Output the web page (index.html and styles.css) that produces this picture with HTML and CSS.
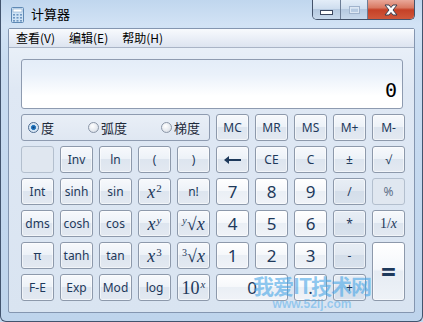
FILE: index.html
```html
<!DOCTYPE html>
<html lang="zh">
<head>
<meta charset="utf-8">
<title>计算器</title>
<link rel="stylesheet" href="styles.css">
</head>
<body>
<div class="window">
  <div class="titlebar">
    <svg class="appicon" width="13" height="16" viewBox="0 0 13 16">
      <rect x="0.5" y="0.5" width="12" height="15" rx="1" fill="#cfe3f5" stroke="#5f89b4"/>
      <rect x="2" y="2" width="9" height="3" fill="#ffffff" stroke="#7fa3c8" stroke-width="0.6"/>
      <g fill="#6f97c2">
        <rect x="2" y="7" width="2" height="1.6"/><rect x="5.5" y="7" width="2" height="1.6"/><rect x="9" y="7" width="2" height="1.6"/>
        <rect x="2" y="10" width="2" height="1.6"/><rect x="5.5" y="10" width="2" height="1.6"/><rect x="9" y="10" width="2" height="1.6"/>
        <rect x="2" y="13" width="2" height="1.6"/><rect x="5.5" y="13" width="2" height="1.6"/><rect x="9" y="13" width="2" height="1.6"/>
      </g>
    </svg>
    <span class="title">计算器</span>
    <div class="caption">
      <div class="cbtn cmin"><span class="minbar"></span></div>
      <div class="cbtn cmax"><span class="maxbox"></span></div>
      <div class="cbtn cclose">
        <svg width="16" height="12" viewBox="0 0 16 12"><path d="M2 1h4l2 2.5L10 1h4l-4 5 4 5h-4l-2-2.5L6 11H2l4-5z" fill="#ffffff" stroke="#3a3f4f" stroke-width="1"/></svg>
      </div>
    </div>
  </div>
  <div class="client">
    <div class="menubar">
      <span class="menu">查看(V)</span>
      <span class="menu">编辑(E)</span>
      <span class="menu">帮助(H)</span>
    </div>
    <div class="body">
      <div class="display"><span class="value">0</span></div>
      <div class="keys">
        <div class="radios">
          <span class="radio on"><span class="dot"></span>度</span>
          <span class="radio"><span class="dot"></span>弧度</span>
          <span class="radio"><span class="dot"></span>梯度</span>
        </div>
        <div class="btn">MC</div>
        <div class="btn">MR</div>
        <div class="btn">MS</div>
        <div class="btn">M+</div>
        <div class="btn">M-</div>

        <div class="btn off"></div>
        <div class="btn">Inv</div>
        <div class="btn">ln</div>
        <div class="btn">(</div>
        <div class="btn">)</div>
        <div class="btn"><svg width="18" height="8" viewBox="0 0 18 8"><path d="M17 4H3" stroke="#1e395b" stroke-width="2"/><path d="M0 4l5-4v8z" fill="#1e395b"/></svg></div>
        <div class="btn">CE</div>
        <div class="btn">C</div>
        <div class="btn">±</div>
        <div class="btn">√</div>

        <div class="btn">Int</div>
        <div class="btn">sinh</div>
        <div class="btn">sin</div>
        <div class="btn m"><i>x</i><sup>2</sup></div>
        <div class="btn">n!</div>
        <div class="btn num">7</div>
        <div class="btn num">8</div>
        <div class="btn num">9</div>
        <div class="btn op">/</div>
        <div class="btn off">%</div>

        <div class="btn">dms</div>
        <div class="btn">cosh</div>
        <div class="btn">cos</div>
        <div class="btn m"><i>x</i><sup><i>y</i></sup></div>
        <div class="btn m"><sup class="rs"><i>y</i></sup>√<i>x</i></div>
        <div class="btn num">4</div>
        <div class="btn num">5</div>
        <div class="btn num">6</div>
        <div class="btn op">*</div>
        <div class="btn m small">1/<i>x</i></div>

        <div class="btn">π</div>
        <div class="btn">tanh</div>
        <div class="btn">tan</div>
        <div class="btn m"><i>x</i><sup>3</sup></div>
        <div class="btn m"><sup class="rs">3</sup>√<i>x</i></div>
        <div class="btn num">1</div>
        <div class="btn num">2</div>
        <div class="btn num">3</div>
        <div class="btn op">-</div>
        <div class="btn eq">=</div>

        <div class="btn">F-E</div>
        <div class="btn">Exp</div>
        <div class="btn">Mod</div>
        <div class="btn">log</div>
        <div class="btn m">10<sup><i>x</i></sup></div>
        <div class="btn num zero">0</div>
        <div class="btn num">.</div>
        <div class="btn op">+</div>
      </div>
      <div class="watermark">
        <span class="wm1">我爱IT技术网</span>
        <span class="wm2">www.52ij.com</span>
      </div>
    </div>
  </div>
</div>
</body>
</html>
```
FILE: styles.css
```css
html, body {
  margin: 0;
  padding: 0;
  width: 423px;
  height: 322px;
  overflow: hidden;
  background: #c5daf0;
}
.window {
  box-sizing: border-box;
  width: 423px;
  height: 322px;
  display: flex;
  flex-direction: column;
  padding: 0 7px 8px 7px;
  border: 1px solid #42546e;
  border-top: none;
  border-radius: 0 0 6px 6px;
  background: linear-gradient(180deg, #c0d6ee 0%, #d2e3f5 25px, #c9dcf1 60px, #bed4ec 100%);
  font-family: "Noto Sans CJK SC", "Noto Sans", sans-serif;
}
.titlebar {
  height: 28px;
  display: flex;
  align-items: flex-start;
  flex: none;
}
.appicon {
  margin: 7px 0 0 3px;
  flex: none;
}
.title {
  margin: 4px 0 0 7px;
  font-size: 13px;
  line-height: 20px;
  color: #000;
}
.caption {
  margin-left: auto;
  display: flex;
  height: 19px;
  border: 1px solid #44536b;
  border-top: none;
  border-radius: 0 0 5px 5px;
  overflow: hidden;
}
.cbtn {
  height: 19px;
  display: flex;
  align-items: center;
  justify-content: center;
  box-sizing: border-box;
}
.cmin, .cmax {
  width: 27px;
  background: linear-gradient(180deg, #e3edf8 0%, #cfdeef 45%, #b5c9e0 50%, #c8d9ec 100%);
  border-right: 1px solid #6c7d96;
}
.cmin { width: 28px; }
.minbar {
  width: 11px;
  height: 3px;
  background: #fff;
  border: 1px solid #3c4860;
  margin-top: 5px;
}
.maxbox {
  width: 9px;
  height: 6px;
  border: 1px solid #a0b3cc;
  box-shadow: inset 0 0 0 1px #dde7f3;
}
.cclose {
  width: 46px;
  background: linear-gradient(180deg, #e9a899 0%, #d97a63 40%, #c54127 52%, #d0583b 100%);
}
.client {
  flex: 1;
  display: flex;
  flex-direction: column;
  border: 1px solid #8496b0;
  border-radius: 2px;
  background: linear-gradient(180deg, #edf3fa 0%, #dfe8f4 60px, #d9e4f1 100%);
  position: relative;
}
.menubar {
  height: 18px;
  display: flex;
  align-items: center;
  padding-left: 7px;
  background: linear-gradient(180deg, #f8fafd 0%, #eaeff7 50%, #dde4f0 100%);
  border-bottom: 1px solid #a9b4c6;
}
.menu {
  font-size: 12px;
  color: #000;
  margin-right: 14px;
  line-height: 18px;
}
.body {
  flex: 1;
  padding: 11px 11px 0 12px;
  display: flex;
  flex-direction: column;
  gap: 5px;
}
.display {
  height: 50px;
  box-sizing: border-box;
  border: 1px solid #8e9bb0;
  border-radius: 3px;
  background: linear-gradient(180deg, #e4edf8 0%, #eaf1fa 30%, #ffffff 75%, #ffffff 100%);
  display: flex;
  align-items: flex-end;
  justify-content: flex-end;
  padding: 0 5px 7px 0;
}
.value {
  font-family: "DejaVu Sans Mono", "Liberation Mono", monospace;
  font-size: 20px;
  line-height: 22px;
  color: #000;
}
.keys {
  display: grid;
  grid-template-columns: repeat(10, 33px);
  grid-auto-rows: 27px;
  column-gap: 6px;
  row-gap: 5px;
}
.radios {
  grid-column: span 5;
  box-sizing: border-box;
  border: 1px solid #8e9bb0;
  border-radius: 3px;
  background: linear-gradient(180deg, #e9eff7, #dfe7f2);
  display: flex;
  align-items: center;
  justify-content: space-between;
  padding: 0 9px 0 6px;
}
.radio {
  display: flex;
  align-items: center;
  font-size: 13px;
  color: #1e2a3a;
  gap: 2px;
}
.dot {
  width: 11px;
  height: 11px;
  border-radius: 50%;
  border: 1px solid #8c97a8;
  background: radial-gradient(circle at 40% 35%, #ffffff 0%, #e4e8ee 60%, #c9d0da 100%);
  box-sizing: border-box;
}
.radio.on .dot {
  background: radial-gradient(circle, #0b3e7a 0%, #2b7fc6 35%, #cfe1f2 45%, #eef4fb 100%);
  border-color: #4f6d92;
}
.btn {
  box-sizing: border-box;
  border: 1px solid #8d99ab;
  border-radius: 3px;
  background: linear-gradient(180deg, #f7f9fc 0%, #edf2f8 46%, #dde5ef 50%, #e3e9f1 100%);
  box-shadow: inset 0 0 0 1px rgba(255,255,255,0.55);
  display: flex;
  align-items: center;
  justify-content: center;
  font-family: "Noto Sans", "Open Sans", sans-serif;
  font-size: 12px;
  color: #1e395b;
  line-height: 1;
}
.btn.num {
  background: linear-gradient(180deg, #ffffff 0%, #f6f8fb 46%, #eaeff5 50%, #f0f3f8 100%);
  font-size: 17px;
}
.btn.op {
  background: linear-gradient(180deg, #e8eef5 0%, #e1e8f1 46%, #d4deea 50%, #d9e2ed 100%);
}
.btn.off {
  border-color: #b3bfce;
  background: #e0e7f0;
  box-shadow: none;
  color: #61718a;
}
.btn.m {
  font-family: "Liberation Serif", "DejaVu Serif", serif;
  font-size: 18px;
}
.btn.m i { font-style: italic; }
.btn.m sup {
  font-size: 11px;
  position: relative;
  top: -3px;
  margin-left: 1px;
}
.btn.m sup.rs {
  font-size: 10px;
  margin-right: 0;
  margin-left: 0;
  top: -3px;
}
.btn.small { font-size: 14px; }
.btn.eq {
  grid-row: span 2;
  font-size: 26px;
  font-weight: 700;
  background: linear-gradient(180deg, #ffffff 0%, #f4f7fb 46%, #e6ecf3 50%, #eef2f7 100%);
}
.btn.zero {
  grid-column: span 2;
}
.watermark {
  position: absolute;
  left: 244px;
  top: 244px;
  display: flex;
  flex-direction: column;
  align-items: center;
  pointer-events: none;
}
.wm1 {
  font-family: "Noto Sans CJK SC", sans-serif;
  font-weight: 700;
  font-size: 21px;
  line-height: 24px;
  color: rgba(70, 165, 230, 0.6);
  letter-spacing: -1px;
}
.wm2 {
  font-family: "Liberation Sans", sans-serif;
  font-size: 12px;
  line-height: 14px;
  font-weight: 700;
  color: rgba(90, 175, 235, 0.55);
}
```
